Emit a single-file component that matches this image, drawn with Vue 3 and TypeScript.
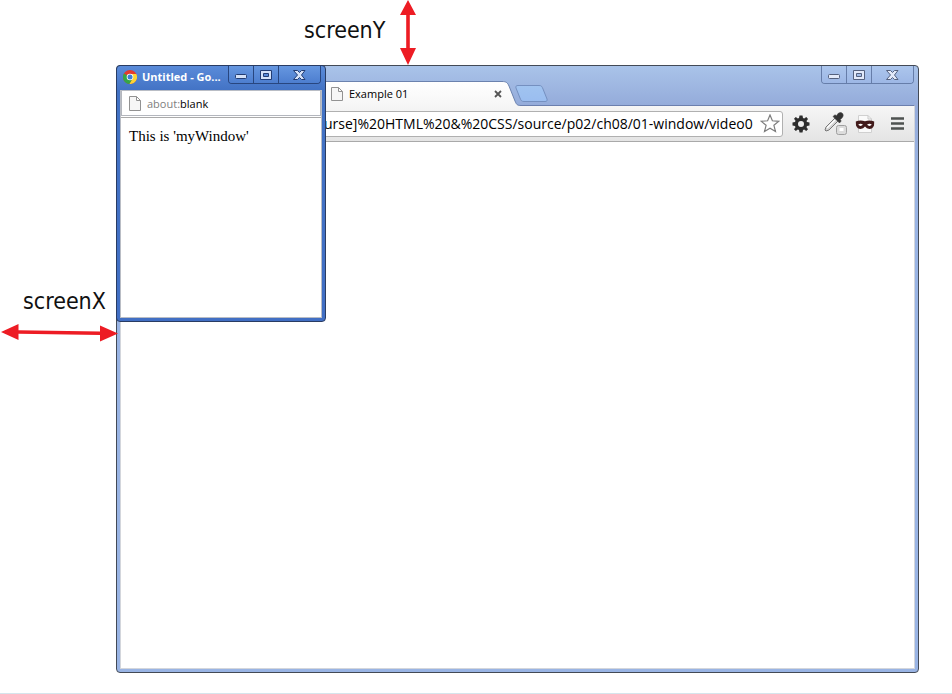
<script setup lang="ts">
import { ref } from 'vue'

const captions = ['Minimize', 'Maximize', 'Close'] as const
const address = ref('urse]%20HTML%20&%20CSS/source/p02/ch08/01-window/video0')
</script>

<template>
  <main class="desk">
    <div class="note-y">
      <span class="label">screenY</span>
      <svg class="arrow-y" width="16" height="65" viewBox="0 0 16 65" aria-hidden="true">
        <path d="M8 0L16 15H9.8V48H16L8 65L0 48H6.2V15H0Z" />
      </svg>
    </div>

    <div class="note-x">
      <span class="label">screenX</span>
      <svg class="arrow-x" width="118" height="20" viewBox="0 0 118 20" aria-hidden="true">
        <path d="M1 9L18.5 1V7.2L100 8.4V2.5L118 10.5L100 18.5V12L18.5 10.8V17Z" />
      </svg>
    </div>

    <section class="window browser">
      <header class="tabstrip">
        <div class="tabs">
          <svg class="tab-shape" width="420" height="25" viewBox="0 0 420 25" aria-hidden="true">
            <defs>
              <linearGradient id="tabFill" x1="0" y1="0" x2="0" y2="1">
                <stop offset="0" stop-color="#ffffff" />
                <stop offset="1" stop-color="#f6f6f6" />
              </linearGradient>
              <linearGradient id="newTab" x1="0" y1="0" x2="0" y2="1">
                <stop offset="0" stop-color="#a1c4f0" />
                <stop offset="1" stop-color="#9abdf0" />
              </linearGradient>
            </defs>
            <path d="M0 .5H382C386 .5 387.500 1.500 389 5L395 20C396.500 23.500 397 24.500 401 24.500V25H0Z" fill="url(#tabFill)" />
            <path d="M0 .5H382C386 .5 387.500 1.500 389 5L395 20C396.500 23.500 397 24.500 401 24.500" fill="none" stroke="#6b82ae" />
          </svg>
          <div class="tab">
            <svg width="12" height="14" viewBox="0 0 12 14" aria-hidden="true">
              <path d="M1 .5H7.500L11.500 4.500V13.500H.5V.5ZM7.500 .5V4.500H11.500" fill="#f6f6f6" stroke="#929292" />
            </svg>
            <span class="tab-title">Example 01</span>
            <button class="plain" aria-label="Close tab">
              <svg width="8" height="8" viewBox="0 0 8 8"><path d="M1 1L7 7M7 1L1 7" stroke="#555" stroke-width="1.8" /></svg>
            </button>
          </div>
          <button class="plain new-tab" aria-label="New tab">
            <svg width="33" height="17" viewBox="0 0 33 17">
              <path d="M3 .5H24C26.500 .5 27 1.500 28 4L32 14C32.500 15.500 32 16.500 30 16.500H9C6.500 16.500 6 15.500 5 13L1 3C.5 1.500 1 .5 3 .5Z" fill="url(#newTab)" stroke="#7590c0" />
            </svg>
          </button>
        </div>
        <div class="captions">
          <button v-for="name in captions" :key="name" :class="name.toLowerCase()" :aria-label="name">
            <svg v-if="name === 'Minimize'" width="13" height="5" viewBox="0 0 13 5"><rect x=".5" y=".5" width="11" height="4" rx="1" /></svg>
            <svg v-else-if="name === 'Maximize'" width="12" height="10" viewBox="0 0 12 10"><path fill-rule="evenodd" d="M.5 .5H11.500V9.500H.5ZM3.500 3.500V6.500H8.500V3.500Z" /></svg>
            <svg v-else width="13" height="10" viewBox="0 0 13 10"><path d="M.5 .5H4.500L6.500 2.500L8.500 .5H12L8.500 5L12 9.500H8.500L6.500 7.500L4.500 9.500H.5L4.500 5Z" /></svg>
          </button>
        </div>
      </header>

      <div class="content">
        <div class="toolbar">
          <div class="omnibox">
            <input v-model="address" class="url" type="text" aria-label="Address" spellcheck="false" />
            <button class="plain" aria-label="Bookmark this page">
              <svg width="20" height="19" viewBox="0 0 20 19"><path d="M10 1L12.400 6.800L18.800 7.300L13.900 11.300L15.500 17.500L10 14.200L4.500 17.500L6.100 11.300L1.200 7.300L7.600 6.800Z" fill="#fff" stroke="#7d7d7d" stroke-width="1.200" /></svg>
            </button>
          </div>
          <button class="plain tool" aria-label="Settings">
            <svg width="18" height="18" viewBox="0 0 18 18">
              <path fill="#2d2d2d" fill-rule="evenodd" d="M7.500 .5H10.500L11 3L12.200 3.500L14.300 2L16 3.900L14.500 5.900L15 7L17.500 7.500V10.500L15 11L14.500 12.200L16 14.200L14.200 16L12.200 14.500L11 15L10.500 17.500H7.500L7 15L5.800 14.500L3.800 16L2 14.200L3.500 12.200L3 11L.5 10.500V7.500L3 7L3.500 5.800L2 3.800L3.800 2L5.800 3.500L7 3ZM9 6A3 3 0 1 0 9 12A3 3 0 1 0 9 6Z" />
            </svg>
          </button>
          <button class="plain tool picker" aria-label="Color picker">
            <svg width="24" height="24" viewBox="0 0 24 24">
              <path d="M2 18L3 15L12 6L15 9L6 18L3 19Z" fill="#d4d4d4" stroke="#777" />
              <path d="M4 16L12 8" stroke="#fff" stroke-width="1.500" />
              <path d="M10 4.500L12 2.800L13.500 3.800L15 1.500Q18 -.8 19.800 1.800Q21 4 18.800 6.200L17.200 7.500L18.200 9L16.500 11Z" fill="#333" stroke="#444" stroke-width=".6" />
              <rect x="13.500" y="13.500" width="10" height="9" rx="2" fill="#dcdcdc" stroke="#a0a0a0" />
              <rect x="16.500" y="16" width="4" height="3" fill="#fff" />
            </svg>
          </button>
          <button class="plain tool" aria-label="Incognito mask">
            <svg width="20" height="20" viewBox="0 0 20 20">
              <path d="M3.500 1.500H13L16.500 5V18.500H3.500Z" fill="#fafafa" stroke="#d0d0d0" />
              <path d="M13 1.500V5H16.500" fill="none" stroke="#c8c8c8" />
              <path d="M.8 7.500Q5 5.800 10 7.200Q15 5.800 19.200 7.500L19 11.500Q17.500 15 14.500 15Q11.500 15 10 12.600Q8.500 15 5.500 15Q2.500 15 1 11.500Z" fill="#421b1b" />
              <path d="M3.200 10.800Q5.500 8.800 8 10.800Q5.500 13 3.200 10.800ZM12 10.800Q14.500 8.800 16.800 10.800Q14.500 13 12 10.800Z" fill="#fff" />
            </svg>
          </button>
          <button class="plain tool menu" aria-label="Menu">
            <svg width="13" height="13" viewBox="0 0 13 13"><path d="M0 1.500H13M0 6.500H13M0 11.500H13" stroke="#4e5250" stroke-width="2.600" /></svg>
          </button>
        </div>
      </div>
    </section>

    <section class="window popup">
      <header class="titlebar">
        <svg class="logo" width="14" height="14" viewBox="0 0 14 14" aria-hidden="true">
          <circle cx="7" cy="7" r="7" fill="#e33b2e" />
          <path d="M7 7L.9 3.500A7 7 0 0 0 6.500 14L9.700 8.600Z" fill="#35a647" />
          <path d="M7 3.900H13.300A7 7 0 0 1 6.500 14L9.700 8.600Z" fill="#fbd535" />
          <circle cx="7" cy="7" r="3.300" fill="#fff" />
          <circle cx="7" cy="7" r="2.500" fill="#3d7fd6" />
        </svg>
        <span class="title">Untitled - Go...</span>
        <div class="captions">
          <button v-for="name in captions" :key="name" :class="name.toLowerCase()" :aria-label="name">
            <svg v-if="name === 'Minimize'" width="13" height="5" viewBox="0 0 13 5"><rect x=".5" y=".5" width="11" height="4" rx="1" /></svg>
            <svg v-else-if="name === 'Maximize'" width="12" height="10" viewBox="0 0 12 10"><path fill-rule="evenodd" d="M.5 .5H11.500V9.500H.5ZM3.500 3.500V6.500H8.500V3.500Z" /></svg>
            <svg v-else width="13" height="10" viewBox="0 0 13 10"><path d="M.5 .5H4.500L6.500 2.500L8.500 .5H12L8.500 5L12 9.500H8.500L6.500 7.500L4.500 9.500H.5L4.500 5Z" /></svg>
          </button>
        </div>
      </header>
      <div class="content">
        <div class="location">
          <svg width="12" height="15" viewBox="0 0 12 15" aria-hidden="true">
            <path d="M.5 .5H7.500L11.500 4.500V14.500H.5ZM7.500 .5V4.500H11.500" fill="#f6f6f6" stroke="#929292" />
          </svg>
          <span><span class="scheme">about:</span>blank</span>
        </div>
        <p class="document">This is 'myWindow'</p>
      </div>
    </section>
  </main>
</template>

<style>
body {
  margin: 0;
  background: #fff;
}
</style>

<style scoped>
.desk {
  position: relative;
  display: grid;
  grid-template-columns: 116px 1fr 33px;
  grid-template-rows: 65px 1fr 20px;
  box-sizing: border-box;
  min-height: 100vh;
  border-bottom: 1px solid #d5e5ec;
  font-family: "Open Sans", "Noto Sans", sans-serif;
  font-size: 11px;
  color: #000;
}

.label {
  font-family: "DejaVu Sans Condensed", "DejaVu Sans", sans-serif;
  font-size: 23px;
  line-height: 28px;
  color: #111;
}

.note-y {
  grid-column: 1 / -1;
  display: flex;
  align-items: flex-start;
  gap: 15px;
  padding-left: 304px;
}

.note-y .label {
  padding-top: 16px;
}

.note-x {
  grid-column: 1;
  grid-row: 2;
  z-index: 3;
  display: flex;
  flex-direction: column;
  gap: 8px;
  padding-top: 222px;
}

.note-x .label {
  padding-left: 23px;
}

.arrow-x,
.arrow-y {
  flex: none;
  overflow: visible;
  fill: #ed1c24;
}

.plain {
  display: flex;
  flex: none;
  margin: 0;
  padding: 0;
  border: 0;
  background: none;
}

.window {
  display: flex;
  flex-direction: column;
  box-sizing: border-box;
  border: 1px solid #434a56;
  border-radius: 4px;
  padding: 0 3px 3px;
}

.content {
  flex: 1;
  display: flex;
  flex-direction: column;
  background: #fff;
}

.browser {
  grid-column: 2;
  grid-row: 2;
  background: linear-gradient(#a9c3e9, #94abda 40px, #99b4e4 120px, #99b4e4);
}

.browser .content {
  border: 1px solid #d3d6dc;
  border-top-color: #6b7fae;
}

.tabstrip {
  display: flex;
  justify-content: space-between;
  height: 39px;
}

.tabs {
  display: grid;
  grid-template-columns: 395px auto;
  align-items: center;
  margin-top: 15px;
  height: 25px;
  z-index: 1;
}

.tab-shape,
.tab {
  grid-column: 1;
  grid-row: 1;
}

.tab {
  display: flex;
  align-items: center;
  gap: 6px;
  padding: 0 13px 0 211px;
}

.tab-title {
  flex: 1;
  line-height: 16px;
}

.new-tab {
  grid-column: 2;
  grid-row: 1;
}

.captions {
  display: flex;
  flex: none;
  box-sizing: border-box;
  height: 18px;
  margin-right: 1px;
  border: 1px solid #667da9;
  border-top: 0;
  border-radius: 0 0 4px 4px;
  overflow: hidden;
}

.captions button {
  display: flex;
  align-items: center;
  justify-content: center;
  box-sizing: border-box;
  width: 25px;
  padding: 0;
  border: 0;
  border-right: 1px solid #667da9;
  background: linear-gradient(#acc6ed, #9db7e5);
}

.captions .minimize {
  padding-top: 4px;
}

.captions .close {
  width: 41px;
  border-right: 0;
}

.captions svg {
  fill: #e3eafa;
  stroke: #54617e;
}

.toolbar {
  display: flex;
  align-items: center;
  height: 35px;
  padding-right: 10px;
  border-bottom: 1px solid #a9a9a9;
  background: linear-gradient(#f6f6f6, #e4e4e4);
}

.omnibox {
  flex: 1;
  display: flex;
  align-items: center;
  box-sizing: border-box;
  height: 26px;
  min-width: 0;
  margin-right: 9px;
  padding-right: 2px;
  border: 1px solid #b0b0b0;
  border-radius: 3px;
  background: #fff;
}

.url {
  flex: 1;
  min-width: 0;
  height: 24px;
  box-sizing: border-box;
  margin: 0 2px 0 0;
  padding: 0 0 0 202px;
  border: 0;
  outline: 0;
  background: none;
  font-family: "Open Sans", "Noto Sans", sans-serif;
  font-size: 14px;
  color: #000;
}

.tool {
  margin-right: 13px;
}

.picker {
  margin-right: 8px;
}

.menu {
  margin: 0 0 0 3px;
}

.popup {
  position: absolute;
  top: 65px;
  left: 116px;
  z-index: 2;
  width: 210px;
  height: 257px;
  border-color: #293c63;
  background: linear-gradient(#5a8bd9, #4272c4 25px, #416fc4);
}

.titlebar {
  display: flex;
  align-items: center;
  gap: 5px;
  box-sizing: border-box;
  height: 24px;
  padding: 0 0 0 3px;
}

.logo {
  flex: none;
  margin-bottom: 2px;
}

.title {
  flex: 1;
  min-width: 0;
  margin-bottom: 2px;
  white-space: nowrap;
  line-height: 16px;
  font-weight: 700;
  color: #fff;
}

.popup .captions {
  align-self: flex-start;
  border-color: #28467f;
}

.popup .captions button {
  border-color: #28467f;
  background: linear-gradient(#6697e0, #4d7ecf);
}

.popup .captions svg {
  fill: #d4e1f8;
  stroke: #223c72;
}

.popup .content {
  border: 1px solid #b9bdc5;
}

.location {
  display: flex;
  align-items: center;
  gap: 6px;
  height: 24px;
  padding: 0 7px;
  border: 1px solid #b3b6bd;
  border-top: 0;
  box-shadow: 0 1px #fff, 0 2px #aaa;
}

.scheme {
  color: #808080;
}

.document {
  margin: 0;
  padding: 11px 8px;
  font-family: "Liberation Serif", serif;
  font-size: 15px;
  line-height: 18px;
}
</style>
